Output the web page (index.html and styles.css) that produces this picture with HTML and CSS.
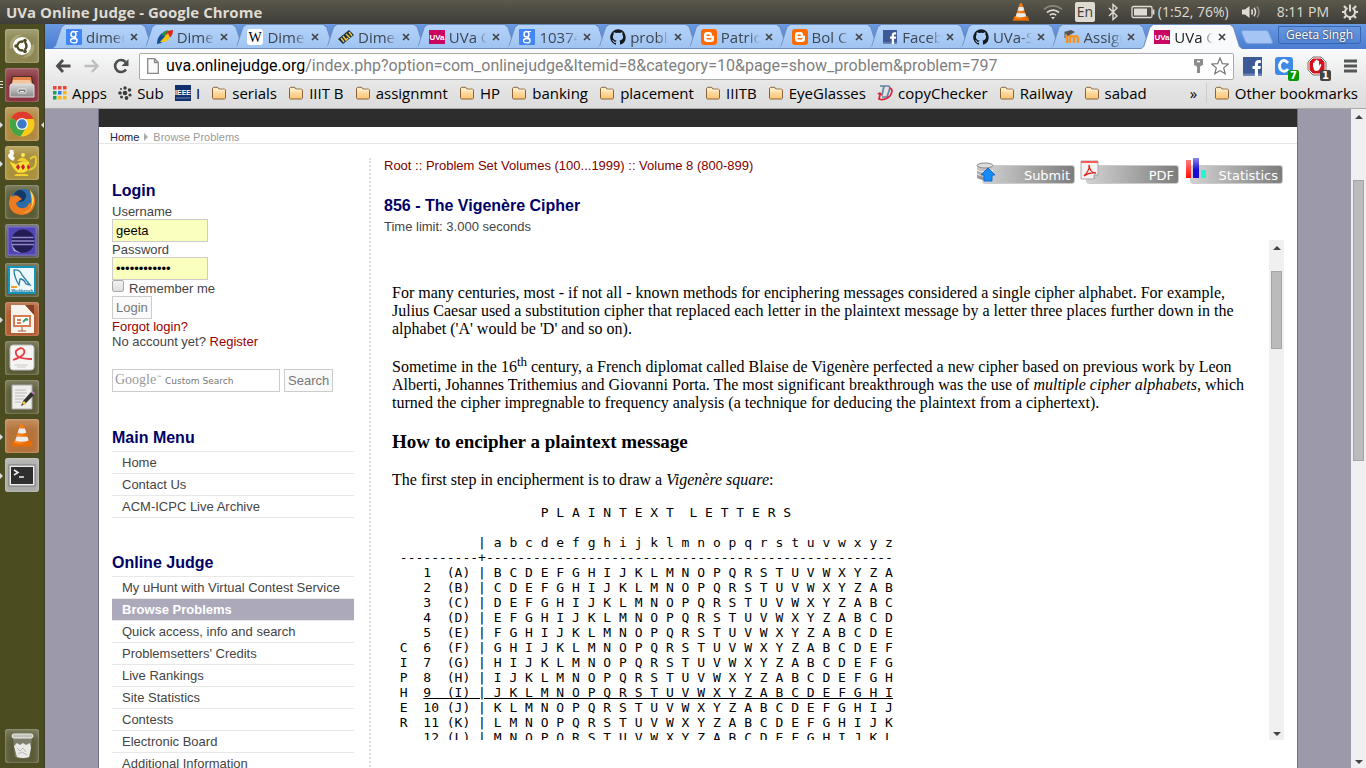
FILE: index.html
```html
<!DOCTYPE html>
<html lang="en">
<head>
<meta charset="utf-8">
<title>UVa Online Judge</title>
<link rel="stylesheet" href="styles.css">
</head>
<body>
<svg class="defs" aria-hidden="true">
  <defs>
    <linearGradient id="gold" x1="0" y1="0" x2="0" y2="1"><stop offset="0" stop-color="#ffedc9"/><stop offset="1" stop-color="#fcc471"/></linearGradient>
    <linearGradient id="orange" x1="0" y1="0" x2="1" y2="0"><stop offset="0" stop-color="#ff9a2e"/><stop offset="1" stop-color="#e55f00"/></linearGradient>
    <linearGradient id="steel" x1="0" y1="0" x2="0" y2="1"><stop offset="0" stop-color="#dadada"/><stop offset="1" stop-color="#8b8b8b"/></linearGradient>
    <linearGradient id="redbar" x1="0" y1="0" x2="0" y2="1"><stop offset="0" stop-color="#ff7b7b"/><stop offset="1" stop-color="#ff0d0d"/></linearGradient>
    <linearGradient id="bluebar" x1="0" y1="0" x2="0" y2="1"><stop offset="0" stop-color="#8c86ee"/><stop offset=".6" stop-color="#1a0cd6"/></linearGradient>
    <symbol id="folder" viewBox="0 0 16 16"><path d="M1.500 13.200V3.300l1-1h4.300l1.200 1.800h5.500l1 1v8.100l-1 .8h-11z" fill="url(#gold)" stroke="#8c6239"/><path d="M2.500 5.200h11" stroke="#fff3d8"/></symbol>
    <symbol id="close" viewBox="0 0 10 10"><path d="M2 2l6 6M8 2L2 8" stroke="#444" stroke-width="1.700" fill="none"/></symbol>
    <symbol id="github" viewBox="0 0 16 16"><path fill="#15191c" fill-rule="evenodd" d="M8 .2a8 8 0 0 0-2.600 15.500c.4.1.6-.2.600-.4v-1.500c-2.200.5-2.700-1-2.700-1-.4-.9-.9-1.200-.9-1.200-.7-.5.1-.5.1-.5.8.1 1.200.8 1.200.8.7 1.200 1.900.9 2.300.7.1-.5.3-.9.500-1.100-1.800-.2-3.600-.9-3.600-4 0-.9.300-1.600.8-2.100-.1-.2-.4-1 .1-2.100 0 0 .7-.2 2.200.8a7.500 7.500 0 0 1 4 0c1.500-1 2.200-.8 2.200-.8.4 1.100.2 1.900.1 2.100.5.6.8 1.300.8 2.100 0 3.100-1.900 3.800-3.700 4 .3.3.6.8.6 1.500v2.200c0 .2.1.5.6.4A8 8 0 0 0 8 .2z"/></symbol>
    <symbol id="google" viewBox="0 0 16 16"><rect width="16" height="16" rx="1" fill="#4286f5"/><ellipse cx="7.500" cy="5.300" rx="2.500" ry="2.800" fill="none" stroke="#fff" stroke-width="1.500"/><ellipse cx="7.800" cy="11.700" rx="3.300" ry="2.200" fill="none" stroke="#fff" stroke-width="1.300"/><path d="M8 2.500h4M8 8q3 1 3 3" stroke="#fff" stroke-width="1.200" fill="none"/></symbol>
    <symbol id="blogger" viewBox="0 0 16 16"><rect width="16" height="16" rx="3" fill="#ff6b00"/><path d="M6 3h2.500a2.500 2.500 0 0 1 2.500 2.500c0 1.200 0 1.300 1 1.300.8 0 1 .3 1 1V10a3 3 0 0 1-3 3H6a3 3 0 0 1-3-3V6a3 3 0 0 1 3-3z" fill="#fff"/><path d="M6.200 6.200H8M6.200 9.800h3.500" stroke="#ff6b00" stroke-width="1.600" stroke-linecap="round"/></symbol>
    <symbol id="facebook" viewBox="0 0 16 16"><path d="M0 0h16v16H0z" fill="#3d5a98"/><path d="M0 14h16v2H0z" fill="#6d84b4"/><path d="M10 16V10H8V7.500h2V6c0-2.200 1.200-3.500 3.300-3.500H15V5h-1.200c-.9 0-1.200.4-1.200 1.200v1.300H15l-.3 2.500h-2.100v6z" fill="#fff"/></symbol>
    <symbol id="uva" viewBox="0 0 16 16"><path d="M0 1h16v14H0z" fill="#c9055f"/><text x="8" y="11" font-family="Liberation Sans" font-size="8" font-weight="700" text-anchor="middle" fill="#fff">UVa</text></symbol>
    <symbol id="cone" viewBox="0 0 24 24"><path d="M4 17h16l2 5.500H2z" fill="#e96d05"/><path d="M10.800 1.500h2.400L19 19q-7 3-14 0z" fill="url(#orange)"/><path d="M9.300 6h5.400l1.300 4q-4 1.500-8 0zM7 13.500h10l1.200 3.500q-6 2.500-12.400 0z" fill="#ececec"/></symbol>
  </defs>
</svg>

<header class="panel">
  <span class="panel-title">UVa Online Judge - Google Chrome</span>
  <div class="indicators">
    <svg width="20" height="20"><use href="#cone"/></svg>
    <svg width="20" height="16" viewBox="0 0 20 16" fill="none" stroke-width="1.700"><path d="M1 5.500a13 13 0 0 1 18 0" stroke="#8b887f"/><path d="M4 8.500a9 9 0 0 1 12 0M6.800 11.200a5 5 0 0 1 6.400 0" stroke="#dfdbd2"/><path d="M8 13h4l-2 2.500z" fill="#dfdbd2"/></svg>
    <span class="lang">En</span>
    <svg width="12" height="18" viewBox="0 0 12 18" fill="none" stroke="#dfdbd2" stroke-width="1.400"><path d="M2 5l8 8-4 3.500v-15L10 5l-8 8"/></svg>
    <span class="battery"><svg width="24" height="14" viewBox="0 0 24 14"><rect x="1" y="1.500" width="20" height="11" rx="1.500" fill="none" stroke="#dfdbd2" stroke-width="1.300"/><path d="M3 3.500h13v7H3z" fill="#dfdbd2"/><path d="M22.500 4.500v5" stroke="#dfdbd2" stroke-width="1.800"/></svg>(1:52, 76%)</span>
    <svg width="21" height="16" viewBox="0 0 21 16"><path d="M1 5.500h3L8.500 2v12L4 10.500H1z" fill="#dfdbd2"/><path d="M10.500 5.500q1.800 2.500 0 5M13 3.800q3 4.200 0 8.400" fill="none" stroke="#dfdbd2" stroke-width="1.500"/><path d="M16 2.500q4 5.500 0 11" fill="none" stroke="#8b887f" stroke-width="1.500"/></svg>
    <span class="clock">8:11 PM</span>
    <svg width="18" height="18" viewBox="0 0 18 18" fill="none" stroke="#dfdbd2"><path d="M6.500 4.800a5 5 0 1 0 5 0" stroke-width="2"/><path d="M9 1.500v7" stroke-width="2"/><path d="M3.800 9H1M17 9h-2.800M4.800 5L3 3M13.200 5L15 3M5 13l-2 2M13 13l2 2M9 14.500V17" stroke-width="2.200"/></svg>
  </div>
</header>

<div class="desktop">
<nav class="launcher" aria-label="Launcher">
  <button class="tile t-dash" aria-label="Dash"><svg viewBox="0 0 34 34"><path d="M5 20Q3 6 18 5 8 9 10 18M29 15q2 14-14 14 10-2 9-11" fill="#bcb78e" opacity=".6"/><circle cx="17" cy="17" r="9" fill="#fff"/><circle cx="17" cy="17" r="4.500" fill="none" stroke="#4d4a24" stroke-width="2.500"/><path d="M17 17h-4M17 17l3-6M17 17l3 6" stroke="#fff"/><circle cx="11" cy="17" r="1.800" fill="#4d4a24"/><circle cx="20" cy="11.500" r="1.800" fill="#4d4a24"/><circle cx="20" cy="22.500" r="1.800" fill="#4d4a24"/></svg></button>
  <button class="tile t-files bars" aria-label="Files"><svg viewBox="0 0 34 34"><path d="M7 8h20l2 10H5z" fill="#4a2c21"/><path d="M8 9h18l1 6H7z" fill="#e3824b"/><path d="M8 12h17l2 4H7z" fill="#f5c49c"/><path d="M6 16h22l1 2v11H5V18z" fill="url(#steel)" stroke="#ddd"/><rect x="13" y="21" width="8" height="4" rx="1" fill="#777" stroke="#eee"/><path d="M15 23.500h4" stroke="#eee"/></svg></button>
  <button class="tile t-chrome run active" aria-label="Chrome"><svg viewBox="0 0 34 34"><circle cx="17" cy="17" r="12.500" fill="#f6cb1c"/><path d="M17 17L6.200 10.800A12.500 12.500 0 0 1 28.500 12H17z" fill="#df3a2d"/><path d="M17 17L6.200 10.800a12.500 12.500 0 0 0 9.300 18.600l5.500-9z" fill="#43a545"/><circle cx="17" cy="17" r="6" fill="#f5f5f5"/><circle cx="17" cy="17" r="4.700" fill="#3d79c8"/></svg></button>
  <button class="tile t-lamp run" aria-label="Genie"><svg viewBox="0 0 34 34"><path d="M5 13Q1 9 5 7 3 3 8 4q2 3 0 6l2 2-2 3z" fill="#f8f8f4"/><path d="M25 13q7-6 6 3 0 7-8 8" fill="none" stroke="#e9ca31" stroke-width="2"/><path d="M4 15l7 3q5-3 7-3h6q3 9-5 12H13Q8 24 4 15z" fill="#f7df39" stroke="#b68d17" stroke-width=".6"/><path d="M11 28h11l2 2H9zM12 15q5-7 11 0z" fill="#f4cf30"/><circle cx="18" cy="9" r="2" fill="#f9e866"/><path d="M13 18l2 3-2 3-2-3zM18 18l2 3-2 3-2-3zM23 18l2 3-2 3-1-3z" fill="#cc1e2b"/></svg></button>
  <button class="tile t-dark" aria-label="Firefox"><svg viewBox="0 0 34 34"><circle cx="18" cy="16" r="12" fill="#2c6ca8"/><circle cx="15" cy="11" r="6" fill="#153866"/><path d="M25 5q6 6 5 14-3 11-13 11Q4 29 4 17l2-8 1 3q3-3 6-1l4 3-6 4q1 6 8 5 4-1 5-5 2 2 2-2 3-5-1-11z" fill="#ef7b21"/><path d="M25 5q6 7 3 15-3 7-10 8 10-3 9-12z" fill="#ffd14a"/></svg></button>
  <button class="tile t-eclipse" aria-label="Eclipse"><svg viewBox="0 0 34 34"><rect x="3" y="3" width="28" height="28" fill="#5145b4" stroke="#8077d8"/><path d="M14 6Q2 14 9 27l6 2Q6 18 14 6z" fill="#b3aedb"/><circle cx="18" cy="17" r="11.500" fill="#231d56"/><path d="M7 13.500h21.500M6.500 17h23M7 20.500h22" stroke="#8f86cc" stroke-width="1.500"/></svg></button>
  <button class="tile t-dark" aria-label="MySQL Workbench"><svg viewBox="0 0 34 34"><rect x="4" y="4" width="26" height="26" fill="#edf8fc" stroke="#1493bd" stroke-width="2"/><path d="M9 7q6-1 8 5l8 10-4-1q-2-5-6-5l-1 6q-5-8-5-15z" fill="none" stroke="#2d7d9e" stroke-width="1.300"/><path d="M6 24h6" stroke="#f3a02e" stroke-width="2"/><text x="17" y="29" font-family="Liberation Sans" font-size="4" font-weight="700" text-anchor="middle" fill="#18708d">Workbench</text></svg></button>
  <button class="tile t-impress run" aria-label="Impress"><svg viewBox="0 0 34 34"><path d="M6 3h15l8 9v19H6z" fill="#f6f3ef"/><path d="M20 3h9v10z" fill="#854021"/><rect x="9" y="14" width="16" height="10" fill="#fff" stroke="#d87b50" stroke-width="2"/><path d="M12 18h4M12 21h4" stroke="#d87b50" stroke-width="2"/><path d="M18 20l3-3 2 1" stroke="#3a9b6f" stroke-width="2" fill="none"/><path d="M17 25v4M13 29h8" stroke="#a45b36"/></svg></button>
  <button class="tile t-dark" aria-label="Document Viewer"><svg viewBox="0 0 34 34"><rect x="5" y="4" width="24" height="25" rx="3" fill="#f6f5f3" stroke="#bbb"/><path d="M8 19Q22 14 19 9q-3-4-8 1-2 8 16 8" stroke="#e83b42" stroke-width="1.800" fill="none"/><path d="M9 24h14M12 26h9" stroke="#ccc"/></svg></button>
  <button class="tile t-dark" aria-label="Text Editor"><svg viewBox="0 0 34 34"><path d="M7 5h20v24H7z" fill="#f0eeea" stroke="#aaa"/><path d="M10 10h11M10 13h12M10 16h10M10 19h9M10 22h6" stroke="#bbb"/><path d="M16 26l2-5 8-9 3 3-9 9z" fill="#303030"/><path d="M17 23l2 2 2-2-2-2z" fill="#f5cf3f"/><path d="M26 12l2-1 2 2-1 2z" fill="#b877b8"/></svg></button>
  <button class="tile t-vlc run" aria-label="VLC"><svg viewBox="0 0 34 34"><use href="#cone" x="4" y="3" width="26" height="26"/></svg></button>
  <button class="tile t-term run" aria-label="Terminal"><svg viewBox="0 0 34 34"><rect x="4" y="7" width="26" height="21" fill="#ececec" stroke="#777"/><rect x="6" y="9" width="22" height="17" fill="#2e2e2e"/><path d="M9 12l4 2.500L9 17M14 19h5" stroke="#eee" stroke-width="1.500" fill="none"/></svg></button>
  <button class="tile t-dark trash" aria-label="Trash"><svg viewBox="0 0 34 34"><path d="M8 8h19l-2 20q-7 3-15 0z" fill="#8c8e82" opacity=".7"/><path d="M9 17l3-3 3 2 3-2 3 2 4-2 1 5-2 9q-6 2-12 0z" fill="#e9e9e7"/><path d="M12 19l3 3 3-3 3 4M13 25l4-2 5 3" stroke="#b7b7b4" fill="none"/><rect x="7" y="5" width="21" height="4" rx="2" fill="#bfc0b9" stroke="#eee"/></svg></button>
</nav>

<div class="browser">
  <div class="tabstrip">
    <div class="tabs" role="tablist">
      <button class="tab" role="tab"><svg class="fav"><use href="#google"/></svg><span>dimen</span><svg class="x"><use href="#close"/></svg></button>
      <button class="tab" role="tab"><svg class="fav" viewBox="0 0 16 16"><path d="M0 15Q0 8 5 4l5 4q-3 6-10 7z" fill="#124f97"/><path d="M7 4q4-3 9-3 0 6-4 8z" fill="#d7281d"/><path d="M4 6Q6 2 11 1L8 7z" fill="#25904b"/><path d="M3 13l8-9 2 5-5 4z" fill="#f9c80e"/></svg><span>Dimer</span><svg class="x"><use href="#close"/></svg></button>
      <button class="tab" role="tab"><svg class="fav" viewBox="0 0 16 16"><rect width="16" height="16" rx="3" fill="#fff"/><text x="8" y="13" font-family="Liberation Serif" font-size="14" text-anchor="middle">W</text></svg><span>Dimer</span><svg class="x"><use href="#close"/></svg></button>
      <button class="tab" role="tab"><svg class="fav" viewBox="0 0 16 16"><path d="M0 10L11 1l5 5L5 15z" fill="#172f48"/><path d="M3 9l3 4M5 7l3 4 2-2M8 5l4 4M11 3l3 4" stroke="#f5c52c" stroke-width="1.500" fill="none"/></svg><span>Dimer</span><svg class="x"><use href="#close"/></svg></button>
      <button class="tab" role="tab"><svg class="fav"><use href="#uva"/></svg><span>UVa C</span><svg class="x"><use href="#close"/></svg></button>
      <button class="tab" role="tab"><svg class="fav"><use href="#google"/></svg><span>10374</span><svg class="x"><use href="#close"/></svg></button>
      <button class="tab" role="tab"><svg class="fav"><use href="#github"/></svg><span>probl</span><svg class="x"><use href="#close"/></svg></button>
      <button class="tab" role="tab"><svg class="fav"><use href="#blogger"/></svg><span>Patric</span><svg class="x"><use href="#close"/></svg></button>
      <button class="tab" role="tab"><svg class="fav"><use href="#blogger"/></svg><span>Bol C</span><svg class="x"><use href="#close"/></svg></button>
      <button class="tab" role="tab"><svg class="fav"><use href="#facebook" x="1" y="1" width="14" height="14"/></svg><span>Faceb</span><svg class="x"><use href="#close"/></svg></button>
      <button class="tab" role="tab"><svg class="fav"><use href="#github"/></svg><span>UVa-S</span><svg class="x"><use href="#close"/></svg></button>
      <button class="tab" role="tab"><svg class="fav" viewBox="0 0 16 16"><path d="M3 14V8q1-3 3-1v7M6 9q2-4 4 0v5M10 9q2-4 4 0v5" stroke="#f7931e" stroke-width="2.500" fill="none"/><path d="M0 3l7-2 4 2-7 4z" fill="#555"/><path d="M1 4v5" stroke="#555"/></svg><span>Assign</span><svg class="x"><use href="#close"/></svg></button>
      <button class="tab current" role="tab" aria-selected="true"><svg class="fav"><use href="#uva"/></svg><span>UVa C</span><svg class="x"><use href="#close"/></svg></button>
    </div>
    <button class="newtab" aria-label="New tab"></button>
    <button class="profile">Geeta Singh</button>
  </div>

  <div class="toolbar">
    <button class="nav" aria-label="Back"><svg viewBox="0 0 16 16"><path d="M8 2L2.500 8 8 14M3 8h12.500" stroke="#4d4d4d" stroke-width="2.800" fill="none"/></svg></button>
    <button class="nav" aria-label="Forward"><svg viewBox="0 0 16 16"><path d="M8 2l5.500 6L8 14M13 8H.5" stroke="#bebebe" stroke-width="2.400" fill="none"/></svg></button>
    <button class="nav" aria-label="Reload"><svg viewBox="0 0 16 16"><path d="M13 11.500A6 6 0 1 1 12.500 4" stroke="#4d4d4d" stroke-width="2.600" fill="none"/><path d="M15.500 1v7H8.500z" fill="#4d4d4d"/></svg></button>
    <div class="omnibox">
      <svg width="12" height="16" viewBox="0 0 12 16"><path d="M.7.700h6.800l3.800 3.800v10.800H.7zM7.500.7v3.800h3.800" fill="#fafafa" stroke="#888" stroke-width="1.300"/></svg>
      <span class="url"><b>uva.onlinejudge.org</b>/index.php?option=com_onlinejudge&amp;Itemid=8&amp;category=10&amp;page=show_problem&amp;problem=797</span>
      <svg width="11" height="16" viewBox="0 0 11 16"><path d="M1 1h9v6L7 8.500V15H4V8.500L1 7z" fill="#8d8d8d"/><path d="M4 3.500h3" stroke="#fff" stroke-width="1.500"/></svg>
      <svg width="18" height="18" viewBox="0 0 18 18"><path d="M9 1l2.300 5.600 6 .4-4.600 3.900 1.500 5.900L9 13.600l-5.200 3.200 1.500-5.900L.7 7l6-.4z" fill="#fff" stroke="#777" stroke-width="1.200"/></svg>
    </div>
    <button class="ext" aria-label="Facebook"><svg width="19" height="19"><use href="#facebook"/></svg></button>
    <button class="ext" aria-label="Notes"><svg width="18" height="18" viewBox="0 0 18 18"><rect width="18" height="18" rx="3" fill="#3f89e8"/><path d="M13 6Q9 1.500 6 5q-3 4 0 8 4 3 7-1" stroke="#fff" stroke-width="2.800" fill="none"/></svg><span class="badge green">7</span></button>
    <button class="ext" aria-label="AdBlock"><svg width="20" height="20" viewBox="0 0 20 20"><path d="M6 1h8l5 5v8l-5 5H6l-5-5V6z" fill="#d3111c" stroke="#777"/><path d="M6 2h8l4 4v8l-4 4H6l-4-4V6z" fill="none" stroke="#fff"/><path d="M6 10V7q1-1 1.500 0V5q1-1 1.500 0V4q1-1 1.500 0v1q1-1 1.500 0v5l1-2q2 0 1 2l-2 4q-3 2-5 0z" fill="#fff"/></svg><span class="badge">1</span></button>
    <button class="menu" aria-label="Menu"><svg width="13" height="14" viewBox="0 0 13 14"><path d="M0 2h13M0 7h13M0 12h13" stroke="#555" stroke-width="3"/></svg></button>
  </div>

  <div class="bookmarks">
    <div class="bm-list">
      <a href="#"><svg viewBox="0 0 14 14" class="apps"><path d="M0 0h3.500v3.500H0zM5 0h3.500v3.500H5zM10 0h3.500v3.500H10z" fill="#e9453b"/><path d="M0 5h3.500v3.500H0z" fill="#1b9e58"/><path d="M5 5h3.500v3.500H5z" fill="#2b7de0"/><path d="M10 5h3.500v3.500H10zM5 10h3.500v3.500H5zM10 10h3.500v3.500H10z" fill="#f7b61a"/><path d="M0 10h3.500v3.500H0z" fill="#1b9e58"/></svg>Apps</a>
      <a href="#"><svg class="apps" viewBox="0 0 14 14"><g fill="#3b3b3b"><circle cx="7" cy="7" r="2.300"/><circle cx="7" cy="2" r="1.700"/><circle cx="11.500" cy="4" r="1.800"/><circle cx="12" cy="9" r="1.600"/><circle cx="8.500" cy="12" r="1.900"/><circle cx="3.500" cy="11" r="1.500"/><circle cx="2" cy="7" r="1.800"/><circle cx="3" cy="3" r="1"/></g></svg>Sub</a>
      <a href="#"><svg viewBox="0 0 16 16"><path d="M0 0h16v16H0z" fill="#12306e"/><text x="8" y="10" font-family="Liberation Sans" font-size="7" font-weight="700" text-anchor="middle" fill="#fff">IEEE</text><path d="M1 13h14" stroke="#7186ac"/></svg>I</a>
      <a href="#"><svg><use href="#folder"/></svg>serials</a>
      <a href="#"><svg><use href="#folder"/></svg>IIIT B</a>
      <a href="#"><svg><use href="#folder"/></svg>assignmnt</a>
      <a href="#"><svg><use href="#folder"/></svg>HP</a>
      <a href="#"><svg><use href="#folder"/></svg>banking</a>
      <a href="#"><svg><use href="#folder"/></svg>placement</a>
      <a href="#"><svg><use href="#folder"/></svg>IIITB</a>
      <a href="#"><svg><use href="#folder"/></svg>EyeGlasses</a>
      <a href="#"><svg viewBox="0 0 16 16"><path d="M3 1h8q3 0 1 5l-2 6H5M7 1L5 10" stroke="#5b87a0" stroke-width="1.700" fill="none"/><path d="M13 3q4 2 0 8-5 5-11 3l1-4" stroke="#dc1e37" stroke-width="1.700" fill="none"/><path d="M0 9l3-2 3 4z" fill="#dc1e37"/></svg>copyChecker</a>
      <a href="#"><svg><use href="#folder"/></svg>Railway</a>
      <a href="#"><svg><use href="#folder"/></svg>sabad</a>
    </div>
    <button class="more" aria-label="More bookmarks">»</button>
    <a class="other" href="#"><svg><use href="#folder"/></svg>Other bookmarks</a>
  </div>

  <div class="viewport">
    <div class="page">
      <div class="site-top"></div>
      <nav class="crumbs"><a href="#">Home</a><i></i><span>Browse Problems</span></nav>
      <div class="columns">
        <aside class="sidebar">
          <section class="login">
            <h2>Login</h2>
            <form>
              <label for="user">Username</label>
              <input class="field" id="user" type="text" value="geeta">
              <label for="pass">Password</label>
              <input class="field" id="pass" type="password" value="abcdefghijkl">
              <div class="remember"><input id="rem" type="checkbox"><label for="rem">Remember me</label></div>
              <button class="btn" type="button">Login</button>
            </form>
            <a class="red" href="#">Forgot login?</a>
            <p>No account yet? <a class="red" href="#">Register</a></p>
          </section>
          <form class="search">
            <div class="search-box"><input id="q" type="text" aria-label="Google Custom Search"><label for="q"><span>Google</span><sup>™</sup> Custom Search</label></div>
            <button class="btn" type="button">Search</button>
          </form>
          <section class="menu-block">
            <h2>Main Menu</h2>
            <ul><li><a href="#">Home</a></li><li><a href="#">Contact Us</a></li><li><a href="#">ACM-ICPC Live Archive</a></li></ul>
          </section>
          <section class="menu-block">
            <h2>Online Judge</h2>
            <ul><li><a href="#">My uHunt with Virtual Contest Service</a></li><li class="on"><a href="#">Browse Problems</a></li><li><a href="#">Quick access, info and search</a></li><li><a href="#">Problemsetters' Credits</a></li><li><a href="#">Live Rankings</a></li><li><a href="#">Site Statistics</a></li><li><a href="#">Contests</a></li><li><a href="#">Electronic Board</a></li><li><a href="#">Additional Information</a></li></ul>
          </section>
        </aside>
        <main class="main">
          <div class="main-head">
            <div class="path"><a href="#">Root</a> :: <a href="#">Problem Set Volumes (100...1999)</a> :: <a href="#">Volume 8 (800-899)</a></div>
            <div class="actions">
              <a href="#"><svg width="20" height="20" viewBox="0 0 20 20"><path d="M1 3v13q7 4 15 0V3z" fill="url(#steel)"/><ellipse cx="9" cy="3.500" rx="8" ry="2.500" fill="#ddd" stroke="#888"/><path d="M1 8q7 4 16 0M1 12q7 4 16 0" stroke="#eee" fill="none"/><path d="M12 6l7 7h-3v6H8v-6H5z" fill="#168cf8" stroke="#1668c7"/></svg>Submit</a>
              <a href="#" class="pdf"><svg width="20" height="20" viewBox="0 0 20 20"><path d="M1 1h17v14l-4 4H1z" fill="#f3f3f3" stroke="#aaa"/><path d="M1 1h17v2H1z" fill="#ff5b5b"/><path d="M18 15h-4v4" fill="#ccc" stroke="#999"/><path d="M4 16q6-6 5-11 1 8 7 8-7-1-12 3z" stroke="#e2231a" stroke-width="1.300" fill="none"/></svg>PDF</a>
              <a href="#" class="stats"><svg width="21" height="20" viewBox="0 0 21 20"><path d="M1 2h5v18H1z" fill="url(#redbar)"/><path d="M8 0h6v20H8z" fill="url(#bluebar)"/><path d="M16 12h5v8h-5z" fill="#25f5d2"/></svg>Statistics</a>
            </div>
          </div>
          <h1>856 - The Vigenère Cipher</h1>
          <p class="limit">Time limit: 3.000 seconds</p>
          <div class="frame">
            <article>
              <p>For many centuries, most - if not all - known methods for enciphering messages considered a single cipher alphabet. For example, Julius Caesar used a substitution cipher that replaced each letter in the plaintext message by a letter three places further down in the alphabet ('A' would be 'D' and so on).</p>
              <p>Sometime in the 16<sup>th</sup> century, a French diplomat called Blaise de Vigenère perfected a new cipher based on previous work by Leon Alberti, Johannes Trithemius and Giovanni Porta. The most significant breakthrough was the use of <em>multiple cipher alphabets</em>, which turned the cipher impregnable to frequency analysis (a technique for deducing the plaintext from a ciphertext).</p>
              <h3>How to encipher a plaintext message</h3>
              <p>The first step in encipherment is to draw a <em>Vigenère square</em>:</p>
<pre>                   P L A I N T E X T  L E T T E R S

           | a b c d e f g h i j k l m n o p q r s t u v w x y z
 ----------+----------------------------------------------------
    1  (A) | B C D E F G H I J K L M N O P Q R S T U V W X Y Z A
    2  (B) | C D E F G H I J K L M N O P Q R S T U V W X Y Z A B
    3  (C) | D E F G H I J K L M N O P Q R S T U V W X Y Z A B C
    4  (D) | E F G H I J K L M N O P Q R S T U V W X Y Z A B C D
    5  (E) | F G H I J K L M N O P Q R S T U V W X Y Z A B C D E
 C  6  (F) | G H I J K L M N O P Q R S T U V W X Y Z A B C D E F
 I  7  (G) | H I J K L M N O P Q R S T U V W X Y Z A B C D E F G
 P  8  (H) | I J K L M N O P Q R S T U V W X Y Z A B C D E F G H
 H  <u>9  (I) | J K L M N O P Q R S T U V W X Y Z A B C D E F G H I</u>
 E  10 (J) | K L M N O P Q R S T U V W X Y Z A B C D E F G H I J
 R  11 (K) | L M N O P Q R S T U V W X Y Z A B C D E F G H I J K
    12 (L) | M N O P Q R S T U V W X Y Z A B C D E F G H I J K L</pre>
            </article>
            <div class="scroll inner"><b class="up"></b><div class="track"><i></i></div><b class="down"></b></div>
          </div>
        </main>
      </div>
    </div>
    <div class="scroll outer"><b class="up"></b><div class="track"><i></i></div><b class="down"></b></div>
  </div>
</div>
</div>
</body>
</html>
```

FILE: styles.css
```css
* { box-sizing: border-box; }
body { margin: 0; height: 100vh; display: flex; flex-direction: column; overflow: hidden; font: 13px/15px "Liberation Sans", Arial, sans-serif; color: #444; }
button { border: 0; padding: 0; background: none; font: inherit; color: inherit; }
a { text-decoration: none; color: inherit; }
h1, h2, h3, p, ul { margin: 0; padding: 0; }
ul { list-style: none; }
svg { flex: none; display: block; }
.defs { position: absolute; width: 0; height: 0; }

/* top panel */
.panel { height: 24px; flex: none; display: flex; align-items: center; justify-content: space-between; padding: 0 7px 0 6px; background: linear-gradient(#5a584b, #3e3d38); color: #dfdbd2; font: 14px/20px "Open Sans", "Noto Sans", sans-serif; }
.panel-title { font-size: 15px; font-weight: 700; }
.indicators { display: flex; align-items: center; gap: 12px; }
.lang { background: #dfdbd2; color: #3c3b37; border-radius: 2px; width: 20px; height: 20px; text-align: center; }
.battery { display: flex; align-items: center; gap: 3px; }
.clock { margin-left: 3px; }

.desktop { flex: 1; min-height: 0; display: flex; }

/* launcher */
.launcher { width: 45px; flex: none; display: flex; flex-direction: column; gap: 5px; padding: 5px 0 5px 5px; background: #4b4c20; border-right: 1px solid #3b3c28; }
.tile { position: relative; width: 34px; height: 34px; flex: none; border-radius: 3px; box-shadow: inset 0 0 2px rgba(255,255,255,.55), inset 0 6px 7px rgba(255,255,255,.2); }
.tile svg { width: 34px; height: 34px; }
.t-dash { background: #8b8652; }
.t-files { background: #87323c; }
.t-chrome { background: #b08840; }
.t-lamp { background: #a9903c; }
.t-dark { background: #5b5c37; }
.t-eclipse { background: #57564f; }
.t-impress { background: #b05b30; }
.t-vlc { background: #b4733a; }
.t-term { background: #a9a9a7; }
.trash { margin-top: auto; }
.run::before { content: ""; position: absolute; left: -5px; top: 15px; border: 3px solid transparent; border-left-color: #ddd; border-right: 0; }
.active::after { content: ""; position: absolute; right: -5px; top: 15px; border: 3px solid transparent; border-right-color: #ddd; border-left: 0; }
.bars::before { content: ""; position: absolute; left: -5px; top: 13px; width: 3px; height: 8px; background: repeating-linear-gradient(#ddd 0 1px, transparent 1px 3px); }

/* browser chrome */
.browser { flex: 1; min-width: 0; display: flex; flex-direction: column; }
.tabstrip { height: 25px; flex: none; display: flex; background: linear-gradient(#6a9ae2, #4a7dd0); padding: 0 5px 0 7px; font: 15px/20px "Open Sans", "Noto Sans", sans-serif; }
.tabs { flex: 1; min-width: 0; display: flex; isolation: isolate; }
.tab { position: relative; isolation: isolate; flex: 1 1 0; min-width: 0; display: flex; align-items: center; gap: 4px; padding-left: 14px; color: #3f4650; }
.tab::before, .tab::after { content: ""; position: absolute; z-index: -1; left: 0; right: -12px; top: 0; bottom: 0; clip-path: polygon(0 100%, 3px 90%, 9px 10%, 12px 0, calc(100% - 12px) 0, calc(100% - 9px) 10%, calc(100% - 3px) 90%, 100% 100%); background: #6b8ec0; }
.tab::after { left: 1px; right: -11px; top: 1px; bottom: 1px; background: linear-gradient(#b4d2f9, #9fc4f2); }
.tab.current { z-index: 2; color: #222; }
.tab.current::after { background: #f9fafb; bottom: 0; }
.tab span { flex: 1; min-width: 0; overflow: hidden; white-space: nowrap; text-align: left; -webkit-mask-image: linear-gradient(90deg, #000 70%, transparent); mask-image: linear-gradient(90deg, #000 70%, transparent); }
.fav { width: 16px; height: 16px; }
.x { width: 10px; height: 10px; margin-right: 4px; }
.newtab { width: 28px; height: 14px; margin: 6px 7px 0 12px; border-radius: 3px; background: #a5c6f5; border: 1px solid #7ba2dc; transform: skewX(22deg); }
.profile { align-self: flex-start; width: 83px; height: 18px; margin-top: 2px; border: 1px solid #3766b3; border-radius: 0 0 3px 3px; color: #fff; font-size: 12px; line-height: 16px; text-shadow: 0 0 2px #222; }

.toolbar { height: 34px; flex: none; display: flex; align-items: center; padding: 0 9px 0 10px; background: linear-gradient(#f9fafb, #e6e6e6); }
.nav { width: 16px; height: 16px; margin-right: 13px; }
.nav:nth-child(3) { margin-right: 10px; }
.omnibox { flex: 1; min-width: 0; height: 27px; display: flex; align-items: center; gap: 7px; padding: 0 4px 0 7px; background: #fff; border: 1px solid #aaa; border-radius: 2px; }
.url { flex: 1; font: 16px/22px Roboto, "Open Sans", sans-serif; color: #808080; white-space: nowrap; overflow: hidden; }
.url b { font-weight: 400; color: #000; }
.ext { position: relative; width: 20px; height: 20px; margin-left: 9px; }
.ext + .ext { margin-left: 12px; }
.badge { position: absolute; right: -4px; bottom: -5px; width: 11px; height: 11px; border-radius: 2px; background: #444; color: #fff; font: 700 10px/11px "DejaVu Sans", sans-serif; text-align: center; }
.badge.green { background: #089808; }
.menu { margin-left: 17px; }

.bookmarks { height: 26px; flex: none; display: flex; align-items: center; padding: 0 8px 5px; background: linear-gradient(#e6e6e6, #dcdcdc); border-bottom: 1px solid #aaa; color: #000; font: 15px/20px "Open Sans", "Noto Sans", sans-serif; }
.bookmarks a { display: flex; align-items: center; gap: 5px; white-space: nowrap; }
.bookmarks a svg { width: 16px; height: 16px; }
.bookmarks a svg.apps { width: 14px; height: 14px; }
.bm-list { flex: 1; display: flex; justify-content: space-between; }
.more { width: 60px; padding-left: 34px; border-right: 1px solid #ccc; }
.other { margin-left: 7px; }

/* page */
.viewport { flex: 1; min-height: 0; display: flex; background: #9b99aa; }
.page { flex: 1; min-width: 0; margin: 0 53px; overflow: hidden; background: #fff; border: solid #6e7086; border-width: 0 1px; }
.site-top { height: 18px; background: #2d2d2d; }
.crumbs { display: flex; align-items: center; gap: 5px; height: 17px; padding: 4px 11px 0; border-bottom: 1px solid #e5e5e5; font-size: 11px; line-height: 12px; color: #999; }
.crumbs a { color: #222244; }
.crumbs i { border: 4px solid transparent; border-left: 4px solid #aaa; border-right: 0; }
.columns { display: flex; padding: 14px 13px 0; }
.sidebar { width: 259px; flex: none; padding: 23px 15px 0 0; border-right: 2px dotted #ddd; }
.sidebar h2, h1 { font-size: 16px; line-height: 20px; color: #000066; font-weight: 700; }
.login label { display: block; }
.login h2 { margin-bottom: 3px; }
.field { display: block; width: 96px; height: 23px; border: 1px solid #ccc; padding: 0 3px; background: #faffbd; color: #000; font: 13px "Liberation Sans", Arial, sans-serif; }
.remember { display: flex; gap: 5px; height: 16px; }
.remember label { line-height: 18px; }
.remember input { appearance: none; width: 12px; height: 12px; margin: 0; border: 1px solid #aaa; border-radius: 2px; background: linear-gradient(#f2f2f2, #ddd); }
.btn { height: 23px; padding: 0 3px; border: 1px solid #ccc; background: #fafafa; color: #777; font-size: 13px; display: block; }
.red { color: #990000; }
.path { color: #800000; }
.search { display: flex; gap: 4px; padding: 20px 0 1px; }
.search-box { position: relative; width: 168px; }
.search-box input { width: 100%; height: 23px; border: 1px solid #ccc; display: block; }
.search-box label { position: absolute; left: 3px; top: 3px; font: 9px/16px "DejaVu Sans", sans-serif; color: #777; white-space: nowrap; }
.search-box span { font: 14px/16px "Liberation Serif", serif; color: #999; }
.search-box sup { font-size: 6px; line-height: 6px; }
.menu-block { padding-top: 35px; }
.menu-block h2 { margin-bottom: 3px; }
.menu-block ul { border-top: 1px solid #e8e8e8; }
.menu-block li { height: 22px; border-bottom: 1px solid #e8e8e8; padding: 3px 10px; white-space: nowrap; }
.menu-block .on { background: #aba9ba; color: #fff; font-weight: 700; }

.main { flex: 1; min-width: 0; padding-left: 13px; }
.main-head { display: flex; justify-content: space-between; height: 38px; }
.actions { display: flex; gap: 11px; padding: 7px 1px 0 0; }
.actions a { position: relative; width: 93px; height: 19px; padding-right: 4px; border-radius: 3px; border: 1px solid #ccc; background: linear-gradient(90deg, #d2d2d2, #7d7d7d); color: #fff; font: 13px/19px "DejaVu Sans", sans-serif; text-align: right; }
.actions svg { position: absolute; left: -7px; top: -4px; }
.actions .pdf svg { top: -6px; }
.actions .stats svg { left: -6px; top: -8px; }
.limit { margin: 3px 0 6px; }
.frame { height: 500px; display: flex; overflow: hidden; }
article { flex: 1; min-width: 0; padding: 44px 8px 0; font: 16px/18px "Liberation Serif", "Times New Roman", serif; color: #000; }
article p { margin-bottom: 16px; }
article sup { line-height: 16px; font-size: 13px; }
article h3 { font-size: 19px; line-height: 22px; margin: 19px 0 18px; }
pre { margin: 0; font: 13px/15px "DejaVu Sans Mono", monospace; }

.scroll { width: 15px; flex: none; display: flex; flex-direction: column; align-items: center; background: #f0f0f0; padding: 6px 0 4px; }
.scroll b { border: 4px solid transparent; }
.scroll .up { border-bottom-color: #444; border-top: 0; }
.scroll .down { border-top-color: #444; border-bottom: 0; }
.track { flex: 1; width: 11px; }
.track i { display: block; background: #bbb; border: 1px solid #a5a5a5; }
.inner .track i { height: 78px; margin-top: 21px; }
.outer .track i { height: 281px; margin-top: 61px; }
```
